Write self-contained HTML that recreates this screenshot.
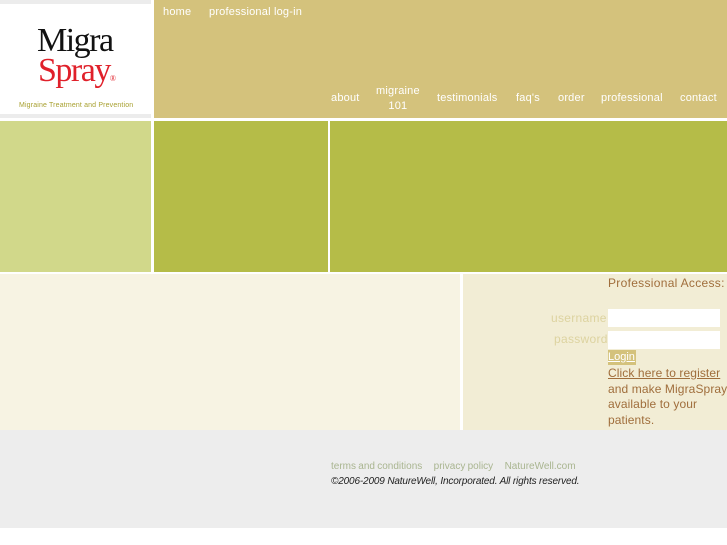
<!DOCTYPE html>
<html><head><style>
body{margin:0;width:727px;height:545px;background:#fff;font-family:"Liberation Sans",sans-serif;position:relative;overflow:hidden}
div{position:absolute;box-sizing:border-box}
.n{color:#fff;font-size:11px;position:absolute;letter-spacing:0.2px}
</style></head><body>
<div style="left:0;top:0;width:151px;height:4px;background:#ececec"></div>
<div style="left:0;top:114px;width:151px;height:4px;background:#ececec"></div>
<div style="left:0;top:4px;width:151px;height:110px;background:#fff">
 <div style="left:37px;top:22px;font-family:'Liberation Serif',serif;font-size:34px;line-height:30px;color:#111;letter-spacing:-1.5px">Migra</div>
 <div style="left:38px;top:52px;font-family:'Liberation Serif',serif;font-size:34px;line-height:30px;color:#e0202a;letter-spacing:-1.5px">Spray<span style="font-size:8px;letter-spacing:0">®</span></div>
 <div style="left:19px;top:98px;font-size:7px;color:#a8a030;white-space:nowrap;letter-spacing:0.15px">Migraine Treatment and Prevention</div>
</div>
<div style="left:154px;top:0;width:573px;height:118px;background:#d4c27c"></div>
<span class="n" style="left:163px;top:6px">home</span>
<span class="n" style="left:209px;top:6px">professional log-in</span>
<span class="n" style="left:331px;top:92px">about</span>
<span class="n" style="left:376px;top:84px;text-align:center;line-height:15px">migraine<br>101</span>
<span class="n" style="left:437px;top:92px">testimonials</span>
<span class="n" style="left:516px;top:92px">faq's</span>
<span class="n" style="left:558px;top:92px">order</span>
<span class="n" style="left:601px;top:92px">professional</span>
<span class="n" style="left:680px;top:92px">contact</span>
<div style="left:0;top:121px;width:151px;height:151px;background:#d1d88a"></div>
<div style="left:154px;top:121px;width:174px;height:151px;background:#b5bc48"></div>
<div style="left:330px;top:121px;width:397px;height:151px;background:#b5bc48"></div>
<div style="left:0;top:274px;width:460px;height:156px;background:#f7f3e3"></div>
<div style="left:463px;top:274px;width:264px;height:156px;background:#f2edd5"></div>
<div style="left:608px;top:276px;font-size:12px;color:#a06e3c;letter-spacing:0.3px;white-space:nowrap">Professional Access:</div>
<div style="left:551px;top:311px;font-size:12px;color:#ddd3a0;letter-spacing:0.3px">username</div>
<div style="left:554px;top:332px;font-size:12px;color:#ddd3a0;letter-spacing:0.3px">password</div>
<div style="left:608px;top:309px;width:112px;height:18px;background:#fff"></div>
<div style="left:608px;top:331px;width:112px;height:18px;background:#fff"></div>
<div style="left:608px;top:350px;width:28px;height:15px;background:#d4c27c;color:#fff;font-size:11px;text-decoration:underline;line-height:15px">Login</div>
<div style="left:608px;top:366px;font-size:12px;line-height:15.7px;color:#a06e3c;width:119px;letter-spacing:0.1px;white-space:nowrap"><u>Click here to register</u><br>and make MigraSpray<br>available to your<br>patients.</div>
<div style="left:0;top:430px;width:727px;height:98px;background:#ededed"></div>
<div style="left:331px;top:461px;font-size:10px;color:#a9b590;white-space:nowrap;word-spacing:-0.5px">terms and conditions &nbsp;&nbsp;&nbsp; privacy policy &nbsp;&nbsp;&nbsp; NatureWell.com</div>
<div style="left:331px;top:476px;font-size:10px;color:#222;font-style:italic;white-space:nowrap;letter-spacing:-0.15px">©2006-2009 NatureWell, Incorporated. All rights reserved.</div>
</body></html>
